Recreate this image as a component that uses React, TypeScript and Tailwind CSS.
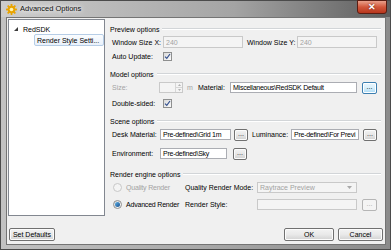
import React from 'react';

const ui = "font-['Liberation_Sans',Arial,sans-serif] text-[7px] leading-none";

function Check() {
  return (
    <div className="w-[9px] h-[9px] border border-[#8e8f8f] bg-gradient-to-br from-[#dadada] to-[#fafafa] flex items-center justify-center">
      <svg width="7" height="7" viewBox="0 0 7 7">
        <path d="M1 3.6 L2.8 5.4 L6 1" stroke="#33508f" strokeWidth="1.2" fill="none" />
      </svg>
    </div>
  );
}

function Radio({ on }: { on?: boolean }) {
  return (
    <div
      className={`w-[9px] h-[9px] rounded-full border flex items-center justify-center ${
        on ? 'border-[#8e8f8f] bg-gradient-to-br from-[#dcdcdc] to-[#fcfcfc]' : 'border-[#c8c8c8] bg-[#f4f4f4]'
      }`}
    >
      {on && <div className="w-[5px] h-[5px] rounded-full bg-gradient-to-br from-[#5fb3e8] to-[#1b4f8c]" />}
    </div>
  );
}

function Input({ children, className }: { children?: React.ReactNode; className: string }) {
  return (
    <div className={`h-full shrink-0 border border-[#abadb3] bg-white flex items-center px-[2px] overflow-hidden whitespace-nowrap tracking-[-0.25px] ${className}`}>
      {children}
    </div>
  );
}

function Dim({ children, className }: { children?: React.ReactNode; className: string }) {
  return (
    <div className={`h-full shrink-0 border border-[#c9c9c9] bg-[#f4f4f4] text-[#a3a3a3] flex items-center px-[2px] whitespace-nowrap ${className}`}>
      {children}
    </div>
  );
}

function Dots() {
  return (
    <div className="w-[14px] h-[12px] shrink-0 rounded-[2px] border border-[#707070] bg-gradient-to-b from-[#f4f4f4] via-[#e6e6e6] to-[#d0d0d0] shadow-[inset_0_0_0_1px_#fbfbfb] flex items-end justify-center pb-[3px] text-[#222]">
      ...
    </div>
  );
}

function Btn({ label, className }: { label: string; className: string }) {
  return (
    <div className={`h-[13px] rounded-[2px] border border-[#707070] bg-gradient-to-b from-[#f3f3f3] via-[#e9e9e9] to-[#d2d2d2] shadow-[inset_0_0_0_1px_#fcfcfc] flex items-center justify-center ${className}`}>
      {label}
    </div>
  );
}

function Header({ title }: { title: string }) {
  return (
    <div className="h-[12px] flex items-center">
      <span className="whitespace-nowrap">{title}</span>
      <div className="flex-1 ml-[3px] border-t border-[#d2d5d8] border-b border-b-white" />
    </div>
  );
}

export default function App() {
  return (
    <div className={`w-[391px] h-[250px] ${ui} text-black`}>
      <div className="w-[391px] h-[250px] flex flex-col border border-[#4b4b4b] bg-gradient-to-r from-[#c2c2c2] via-[#a9a9a9] to-[#8b8b8b]">
        {/* Title bar */}
        <div className="h-[16px] flex items-center bg-gradient-to-r from-[#cdcdcd] via-[#a4a4a4] via-60% to-[#5e5e5e]">
          <svg width="11" height="11" viewBox="0 0 12 12" className="ml-[5px]">
            <g fill="#e9a400">
              <circle cx="6" cy="6" r="4" />
              <rect x="5" y="0" width="2" height="12" rx="0.5" />
              <rect x="0" y="5" width="12" height="2" rx="0.5" />
              <rect x="5" y="0" width="2" height="12" rx="0.5" transform="rotate(45 6 6)" />
              <rect x="5" y="0" width="2" height="12" rx="0.5" transform="rotate(-45 6 6)" />
            </g>
            <circle cx="6" cy="6" r="2" fill="#fff3b0" />
          </svg>
          <span className="ml-[3px] text-[7.5px] text-[#111] [text-shadow:0_0_4px_#fff,0_0_6px_#fff]">Advanced Options</span>
          <div className="ml-auto mr-[3px] self-start -mt-[1px] w-[30px] h-[14px] rounded-b-[3px] border border-[#5b1d12] bg-gradient-to-b from-[#e9a08b] via-[#d2573b] to-[#b8361d] flex items-center justify-center text-white text-[9px] font-bold [text-shadow:0_0_2px_#5b1d12]">
            ✕
          </div>
        </div>

        {/* Body */}
        <div className="flex-1 ml-[5px] mr-[4px] mb-[4px] border border-[#747474] bg-[#f0f0f0] flex flex-col">
          <div className="flex pt-[1px] pl-[1px]">
            {/* Tree */}
            <div className="w-[97px] h-[197px] border border-[#828790] bg-white pt-[3px]">
              <div className="h-[12px] flex items-center pl-[5px]">
                <svg width="4" height="4" viewBox="0 0 4 4">
                  <path d="M4 0 L4 4 L0 4 Z" fill="#3c3c3c" />
                </svg>
                <span className="ml-[5px]">RedSDK</span>
              </div>
              <div className="ml-[25px] mt-[-1px] w-[70px] h-[12px] rounded-[2px] border border-[#b6cde6] bg-gradient-to-b from-[#fafcfe] to-[#e9f1fb] flex items-center pl-[2px] whitespace-nowrap">
                Render Style Setti...
              </div>
            </div>

            {/* Options panel */}
            <div className="ml-[5px] pt-[4px] w-[271px] flex flex-col">
              <Header title="Preview options" />
              <div className="mt-[1px] h-[12px] flex items-center">
                <span className="w-[53px] pl-[2px] shrink-0">Window Size X:</span>
                <Dim className="w-[80px]">240</Dim>
                <span className="w-[54px] pl-[4px] shrink-0">Window Size Y:</span>
                <Dim className="w-[80px]">240</Dim>
              </div>
              <div className="mt-[3px] h-[10px] flex items-center">
                <span className="w-[53px] pl-[2px] shrink-0">Auto Update:</span>
                <Check />
              </div>

              <div className="mt-[7px]">
                <Header title="Model options" />
              </div>
              <div className="mt-[2px] h-[11px] flex items-center">
                <span className="w-[49px] pl-[2px] shrink-0 text-[#a3a3a3]">Size:</span>
                <div className="w-[24px] h-full shrink-0 border border-[#c9c9c9] bg-[#f4f4f4] flex justify-end">
                  <div className="w-[7px] h-full border-l border-[#d6d6d6] flex flex-col">
                    <div className="flex-1 border-b border-[#d6d6d6] flex items-center justify-center">
                      <svg width="3" height="2" viewBox="0 0 3 2"><path d="M0 2 L1.5 0 L3 2 Z" fill="#b0b0b0" /></svg>
                    </div>
                    <div className="flex-1 flex items-center justify-center">
                      <svg width="3" height="2" viewBox="0 0 3 2"><path d="M0 0 L1.5 2 L3 0 Z" fill="#b0b0b0" /></svg>
                    </div>
                  </div>
                </div>
                <span className="w-[15px] pl-[4px] shrink-0 text-[#a3a3a3]">m</span>
                <span className="w-[32px] shrink-0">Material:</span>
                <Input className="w-[127px]">Miscellaneous\RedSDK Default</Input>
                <div className="ml-[5px] w-[15px] h-[12px] shrink-0 rounded-[2px] border border-[#3c7fb1] bg-gradient-to-b from-[#eaf6fd] via-[#d9f0fc] to-[#a7d9f5] shadow-[inset_0_0_0_1px_#ffffff] flex items-end justify-center pb-[3px]">
                  ...
                </div>
              </div>
              <div className="mt-[5px] h-[10px] flex items-center">
                <span className="w-[53px] pl-[2px] shrink-0">Double-sided:</span>
                <Check />
              </div>

              <div className="mt-[7px]">
                <Header title="Scene options" />
              </div>
              <div className="mt-[2px] h-[11px] flex items-center">
                <span className="w-[50px] pl-[2px] shrink-0">Desk Material:</span>
                <Input className="w-[71px]">Pre-defined\Grid 1m</Input>
                <div className="ml-[3px]"><Dots /></div>
                <span className="ml-[4px] w-[39px] shrink-0">Luminance:</span>
                <Input className="w-[68px]">Pre-defined\For Previ</Input>
                <div className="ml-[4px]"><Dots /></div>
              </div>
              <div className="mt-[8px] h-[11px] flex items-center">
                <span className="w-[50px] pl-[2px] shrink-0">Environment:</span>
                <Input className="w-[67px]">Pre-defined\Sky</Input>
                <div className="ml-[6px]"><Dots /></div>
              </div>

              <div className="mt-[9px]">
                <Header title="Render engine options" />
              </div>
              <div className="mt-[2px] h-[11px] flex items-center">
                <div className="w-[75px] shrink-0 flex items-center pl-[3px] text-[#a3a3a3] tracking-[-0.2px]">
                  <Radio />
                  <span className="ml-[4px]">Quality Render</span>
                </div>
                <span className="w-[72px] shrink-0">Quality Render Mode:</span>
                <div className="w-[100px] h-full shrink-0 border border-[#c9c9c9] bg-[#f4f4f4] text-[#a3a3a3] flex items-center pl-[2px]">
                  <span className="flex-1">Raytrace Preview</span>
                  <svg width="5" height="3" viewBox="0 0 5 3" className="mr-[4px]"><path d="M0 0 L2.5 3 L5 0 Z" fill="#a9a9a9" /></svg>
                </div>
              </div>
              <div className="mt-[6px] h-[11px] flex items-center">
                <div className="w-[75px] shrink-0 flex items-center pl-[3px] tracking-[-0.2px]">
                  <Radio on />
                  <span className="ml-[4px]">Advanced Render</span>
                </div>
                <span className="w-[72px] shrink-0">Render Style:</span>
                <Dim className="w-[100px]" />
                <div className="ml-[5px] w-[15px] h-[12px] shrink-0 rounded-[2px] border border-[#b5b5b5] bg-[#f4f4f4] text-[#a3a3a3] flex items-end justify-center pb-[3px]">
                  ...
                </div>
              </div>
            </div>
          </div>

          {/* Bottom buttons */}
          <div className="mt-[12px] flex px-[2px]">
            <Btn label="Set Defaults" className="w-[46px]" />
            <div className="flex-1" />
            <Btn label="OK" className="w-[50px]" />
            <Btn label="Cancel" className="ml-[4px] w-[45px]" />
          </div>
        </div>
      </div>
    </div>
  );
}
